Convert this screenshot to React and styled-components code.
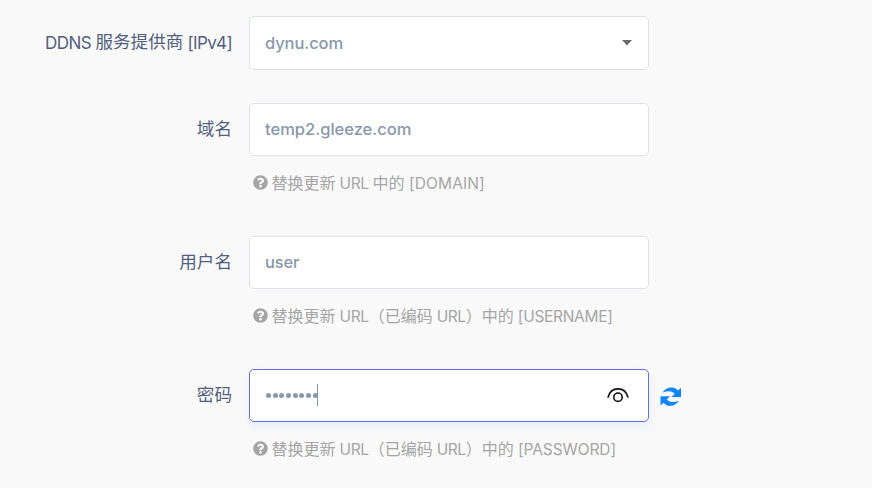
import React from "react";
import styled, { createGlobalStyle } from "styled-components";
import { FaQuestionCircle } from "react-icons/fa";

const GlobalStyle = createGlobalStyle`
  * { box-sizing: border-box; }
  body {
    margin: 0;
    background: #f9f9f9;
    font-family: Inter, "Noto Sans CJK SC", sans-serif;
  }
`;

const Form = styled.form`
  width: 872px;
  height: 488px;
  overflow: hidden;
  padding-top: 16px;
  background: #f9f9f9;
`;

const Row = styled.div`
  display: grid;
  grid-template-columns: 232px 400px auto;
  column-gap: 17px;
  height: ${(p) => p.$height}px;
  align-content: start;
`;

const Latin = styled.span`
  font-size: ${(p) => p.$size || 17}px;
  letter-spacing: ${(p) => p.$spacing || 0}px;
`;

const Label = styled.label`
  display: flex;
  align-items: center;
  justify-content: flex-end;
  height: 53px;
  padding-bottom: 4px;
  color: #525f7f;
  font-size: 17.6px;
  font-weight: 400;
  white-space: pre;

  ${Latin} {
    padding-top: 4px;
  }
`;

const Control = styled.div`
  display: flex;
  align-items: center;
  height: ${(p) => p.$height || 53}px;
  padding: 0 16px 1px 15px;
  border: 1px solid ${(p) => (p.$focused ? "#5e72e4" : "#dee2e6")};
  border-radius: 5px;
  background: #fff;
  color: #8898aa;
  font-weight: 500;
  font-size: 16.5px;
  letter-spacing: ${(p) => p.$spacing || 0}px;
  box-shadow: ${(p) => (p.$focused ? "0 4px 12px rgba(94, 114, 228, 0.1)" : "none")};
`;

const Arrow = styled.svg`
  margin-left: auto;
`;

const Dots = styled.span`
  display: flex;
  gap: 1.67px;
  padding-left: 1px;
`;

const Dot = styled.i`
  width: 5px;
  height: 5px;
  border-radius: 50%;
  background: #8898aa;
`;

const Caret = styled.span`
  width: 1px;
  height: 22px;
  margin-left: -1px;
  background: #8898aa;
`;

const Eye = styled.svg`
  margin-left: auto;
  margin-right: 3px;
`;

const Refresh = styled.svg`
  align-self: center;
  margin: 2px 0 0 -6px;
`;

const Help = styled.p`
  grid-column: 2;
  display: flex;
  align-items: center;
  height: 24px;
  margin: 14px 0 0;
  padding-left: 4px;
  color: #a5a5a5;
  font-size: 16px;
  white-space: pre;

  svg {
    flex: none;
    width: 15px;
    height: 15px;
    margin: 0 3.6px 0 0;
  }

  ${Latin} {
    padding-top: 2px;
  }
`;

function EncodedHelp({ name, spacing }) {
  return (
    <Help>
      <FaQuestionCircle />
      替换更新<Latin $size={15.5} $spacing={-0.4}> URL</Latin>（已编码
      <Latin $size={15.5} $spacing={-0.4}> URL</Latin>）中的
      <Latin $size={15.5} $spacing={spacing}> [{name}]</Latin>
    </Help>
  );
}

export default function App() {
  return (
    <>
      <GlobalStyle />
      <Form>
        <Row $height={87}>
          <Label>
            <Latin $spacing={-0.5}>DDNS </Latin>服务提供商<Latin $spacing={-0.65}> [IPv4]</Latin>
          </Label>
          <Control $height={54} $spacing={-0.1}>
            dynu.com
            <Arrow width="10" height="6" viewBox="0 0 10 6">
              <path d="M0 0h10L5 5.5z" fill="#6b6b6b" />
            </Arrow>
          </Control>
        </Row>
        <Row $height={133}>
          <Label>域名</Label>
          <Control $spacing={0}>temp2.gleeze.com</Control>
          <Help>
            <FaQuestionCircle />
            替换更新<Latin $size={15.5} $spacing={-0.4}> URL </Latin>中的
            <Latin $size={15.5} $spacing={0.1}> [DOMAIN]</Latin>
          </Help>
        </Row>
        <Row $height={133}>
          <Label>用户名</Label>
          <Control $spacing={-0.2}>user</Control>
          <EncodedHelp name="USERNAME" spacing={-0.3} />
        </Row>
        <Row $height={119}>
          <Label>密码</Label>
          <Control $focused>
            <Dots>
              {Array.from({ length: 8 }, (_, i) => (
                <Dot key={i} />
              ))}
            </Dots>
            <Caret />
            <Eye width="22" height="16" viewBox="0 0 22 16" fill="none" stroke="#111" strokeWidth="1.6">
              <path d="M.9 10.600C2.400 4.700 6.300 1.900 11 1.900s8.600 2.800 10.100 8.700" />
              <circle cx="11" cy="10.200" r="4.200" />
            </Eye>
          </Control>
          <Refresh width="22" height="20" viewBox="0 0 22 20" fill="#0a84ff">
            <path d="M2.600 5.400C5 1.800 8 .3 11.500.4c2.900 0 4.800 1.200 6.300 3.100L21 1v9h-9.500l3.300-3.300C12 3.700 8 3.500 2.600 5.400z" />
            <path d="M18.900 13.800c-2.400 3.600-5.400 5.100-8.900 5-2.900 0-4.800-1.200-6.300-3.100L.5 18.200v-9H10l-3.300 3.300c2.800 3 6.800 3.200 12.200 1.300z" />
          </Refresh>
          <EncodedHelp name="PASSWORD" spacing={-0.1} />
        </Row>
      </Form>
    </>
  );
}
